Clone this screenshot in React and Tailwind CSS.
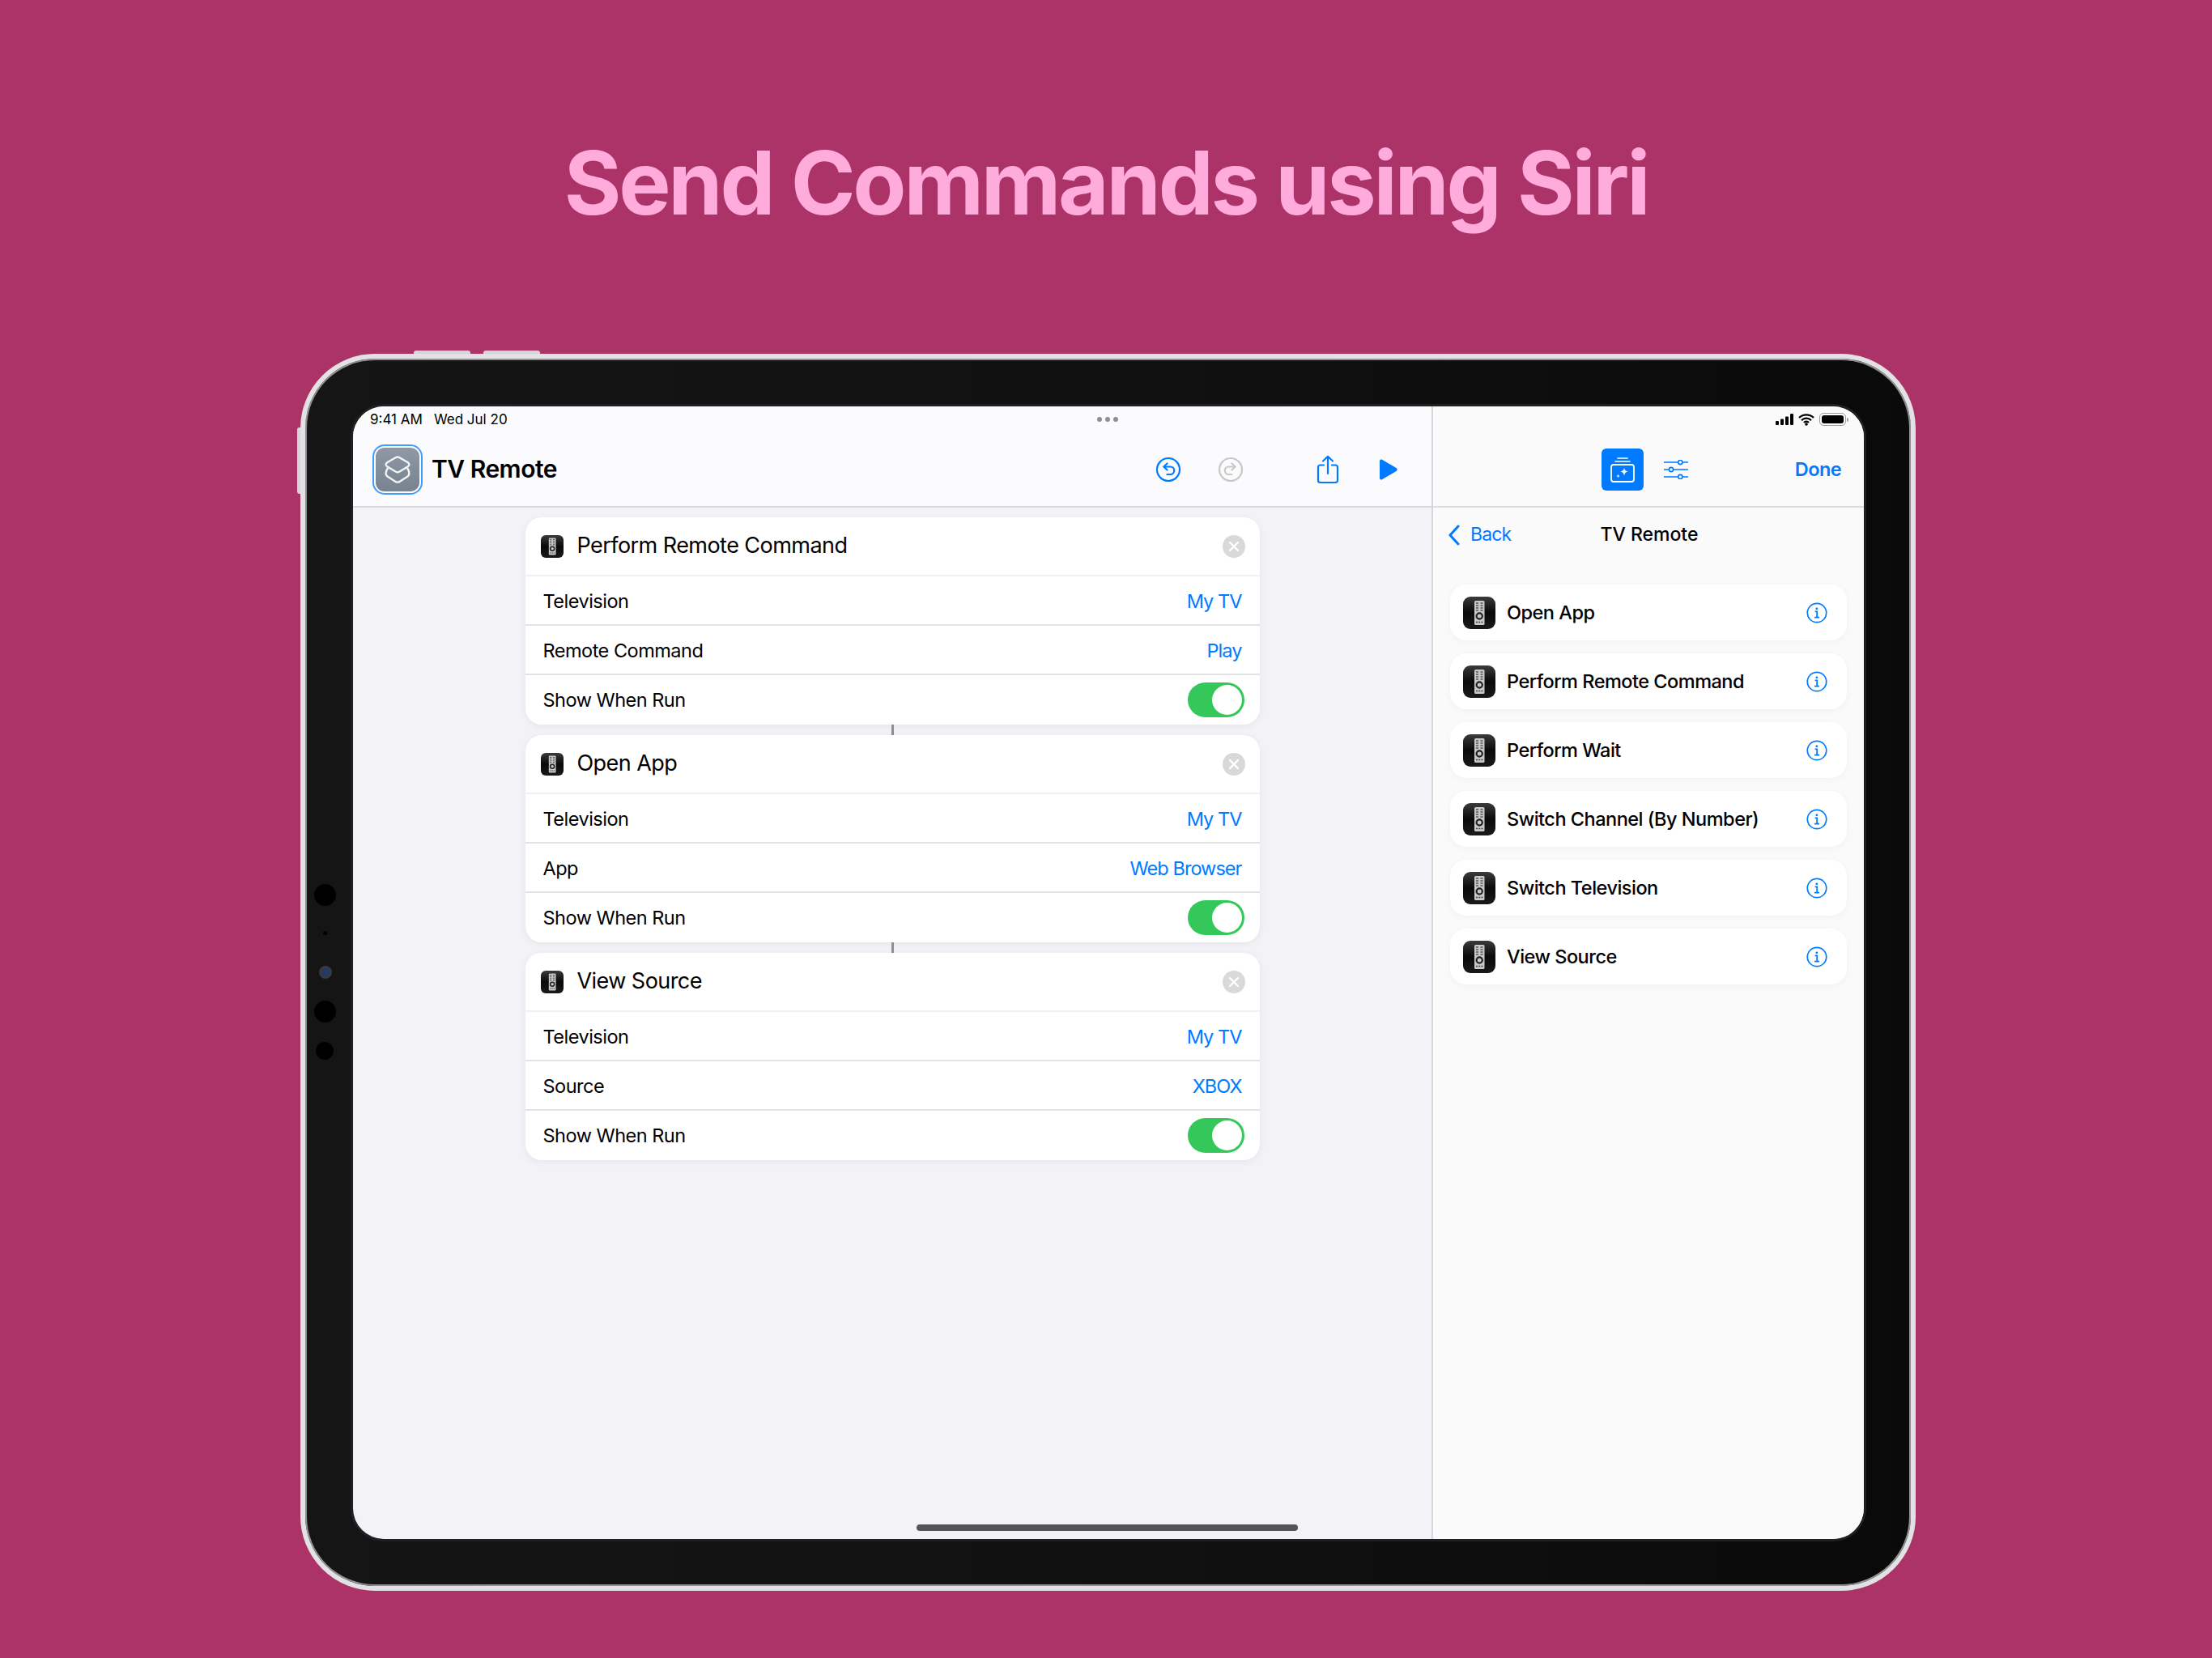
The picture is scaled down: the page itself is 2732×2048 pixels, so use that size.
import React from 'react'

const cards = [
  { title: 'Perform Remote Command', rows: [['Television', 'My TV'], ['Remote Command', 'Play']] },
  { title: 'Open App', rows: [['Television', 'My TV'], ['App', 'Web Browser']] },
  { title: 'View Source', rows: [['Television', 'My TV'], ['Source', 'XBOX']] },
]

const actions = ['Open App', 'Perform Remote Command', 'Perform Wait', 'Switch Channel (By Number)', 'Switch Television', 'View Source']

const RemoteIcon = ({ className }) => (
  <div className={`shrink-0 bg-linear-to-b from-[#3c3c3c] via-[#0a0a0a] to-[#1a1a1a] flex items-center justify-center ${className}`}>
    <svg viewBox="0 0 40 40" className="w-full h-full">
      <rect x="14" y="5" width="12.5" height="30" rx="1.5" fill="#c9c9c9" />
      <path d="M16 8h3M21.5 8h3M16 11h3M21.5 11h3M16 14h3M21.5 14h3M16 17h3M21.5 17h3" stroke="#555" strokeWidth="1.6" />
      <circle cx="20.2" cy="24" r="3.6" fill="none" stroke="#222" strokeWidth="2.2" />
      <path d="M16 31.5h2M19.2 31.5h2M22.4 31.5h2" stroke="#444" strokeWidth="1.6" />
    </svg>
  </div>
)

const Toggle = () => (
  <div className="w-[70px] h-[43px] rounded-full bg-[#34c759] flex items-center justify-end pr-[3px]">
    <div className="w-[37px] h-[37px] rounded-full bg-white" />
  </div>
)

const CloseButton = () => (
  <div className="w-[28px] h-[28px] rounded-full bg-[#d9d9d9] flex items-center justify-center">
    <svg viewBox="0 0 28 28" className="w-[28px] h-[28px]">
      <path d="M9 9l10 10M19 9L9 19" stroke="#fff" strokeWidth="2.4" strokeLinecap="round" />
    </svg>
  </div>
)

const ActionCard = ({ card }) => (
  <div className="w-[907px] h-[256px] bg-white rounded-[20px] shadow-[0_2px_10px_rgba(0,0,0,0.06)] flex flex-col">
    <div className="h-[73px] shrink-0 flex items-center pl-[19px] pr-[18px] border-b-2 border-[#f0f0f2]">
      <RemoteIcon className="w-[28px] h-[28px] rounded-[6px]" />
      <span className="ml-[17px] flex-1 text-[27px] tracking-[-0.55px] text-black">{card.title}</span>
      <CloseButton />
    </div>
    {card.rows.map(([label, value]) => (
      <div key={label} className="h-[61px] shrink-0 flex items-center justify-between pl-[22px] pr-[22px] pt-[2px] border-b-2 border-[#e3e3e5] text-[23.5px] tracking-[-0.5px]">
        <span className="text-black">{label}</span>
        <span className="text-[#007aff] tracking-[-0.95px]">{value}</span>
      </div>
    ))}
    <div className="flex-1 flex items-center justify-between pl-[22px] pr-[19px] text-[23.5px] tracking-[-0.5px]">
      <span className="text-black">Show When Run</span>
      <Toggle />
    </div>
  </div>
)

const InfoIcon = () => (
  <svg viewBox="0 0 26 26" className="w-[26px] h-[26px] shrink-0" fill="none" stroke="#007aff">
    <circle cx="13" cy="13" r="11.7" strokeWidth="1.7" />
    <circle cx="12.8" cy="7.8" r="1.4" fill="#007aff" stroke="none" />
    <path d="M10.6 11.4h2.6v7M10 18.6h6" strokeWidth="1.8" />
  </svg>
)

const UndoIcon = ({ color, flip }) => (
  <svg viewBox="0 0 32 32" className={`w-[32px] h-[32px] ${flip ? '-scale-x-100' : ''}`} fill="none" stroke={color} strokeWidth="2.2" strokeLinecap="round" strokeLinejoin="round">
    <circle cx="16" cy="16" r="14" />
    <path d="M10.5 12.5h8a4.7 4.7 0 0 1 0 9.5h-4" />
    <path d="M14.5 8.5l-4 4 4 4" />
  </svg>
)

const ShareIcon = () => (
  <svg viewBox="0 0 28 36" className="w-[28px] h-[36px]" fill="none" stroke="#007aff" strokeWidth="2.2" strokeLinecap="round" strokeLinejoin="round">
    <path d="M9 12.5H4.5a2.5 2.5 0 0 0-2.5 2.5v16.500a2.500 2.500 0 0 0 2.500 2.500h19a2.500 2.500 0 0 0 2.500-2.500V15a2.500 2.500 0 0 0-2.500-2.500H19" />
    <path d="M14 2v21M8 7.500L14 1.800l6 5.700" />
  </svg>
)

const PlayIcon = () => (
  <svg viewBox="0 0 23 26" className="w-[23px] h-[26px]">
    <path d="M1 2.500c0-1.800 1.500-2.500 3-1.700l17.500 10.300c1.600 1 1.600 2.800 0 3.800L4 25.200c-1.500.8-3 .1-3-1.700z" fill="#007aff" />
  </svg>
)

const AddActionIcon = () => (
  <svg viewBox="0 0 52 52" className="w-[52px] h-[52px]" fill="none" stroke="#fff">
    <path d="M20 12h12" strokeWidth="1.600" strokeLinecap="round" />
    <path d="M17 16h18" strokeWidth="1.600" strokeLinecap="round" />
    <rect x="12" y="20" width="28" height="21" rx="3" strokeWidth="1.800" />
    <path d="M28 23.500c.6 3.400 1.700 4.500 5 5.100-3.300.6-4.400 1.700-5 5.100-.6-3.400-1.700-4.500-5-5.100 3.300-.6 4.400-1.700 5-5.100z" fill="#fff" stroke="none" />
    <path d="M20.500 31.500c.3 1.800.8 2.300 2.500 2.500-1.700.3-2.200.8-2.500 2.500-.3-1.700-.8-2.200-2.500-2.500 1.700-.2 2.200-.7 2.500-2.500z" fill="#fff" stroke="none" />
  </svg>
)

const SlidersIcon = () => (
  <svg viewBox="0 0 30 24" className="w-[30px] h-[24px]" fill="none" stroke="#007aff" strokeWidth="1.600">
    <path d="M0 3h17.500M23 3h7M0 12h6M12 12h18M0 21h17.500M23 21h7" />
    <circle cx="20.300" cy="3" r="2.600" />
    <circle cx="9" cy="12" r="2.600" />
    <circle cx="20.300" cy="21" r="2.600" />
  </svg>
)

const LayersIcon = () => (
  <svg viewBox="0 0 54 54" className="w-[54px] h-[54px]" fill="none" stroke="#f2f4f6" strokeWidth="2.400" strokeLinejoin="round">
    <path d="M24.500 12.200Q27 10.800 29.500 12.200L39.800 18.300Q43 20.800 39.800 23.300L29.500 29.500Q27 30.900 24.500 29.500L14.200 23.300Q11 20.800 14.200 18.300Z" />
    <path d="M15.500 25.400L14.200 26.300Q11 32.800 14.200 35.300L24.500 41.900Q27 43.300 29.500 41.900L39.800 35.300Q43 32.800 39.800 26.300L38.500 25.400" />
  </svg>
)

const StatusIcons = () => (
  <div className="flex items-center gap-[5px]">
    <svg viewBox="0 0 23 14" className="w-[23px] h-[14px]" fill="#000">
      <rect x="0" y="9" width="4" height="5" rx="1" />
      <rect x="6" y="6.500" width="4" height="7.500" rx="1" />
      <rect x="12" y="3.500" width="4" height="10.500" rx="1" />
      <rect x="18" y="0" width="4" height="14" rx="1" />
    </svg>
    <svg viewBox="0 0 20 15" className="w-[20px] h-[15px]" fill="none" stroke="#000" strokeWidth="2.200">
      <path d="M1 5a13 13 0 0 1 18 0M4 8.200a8.500 8.500 0 0 1 12 0M7 11a4 4 0 0 1 6 0" />
      <circle cx="10" cy="13" r="1.800" fill="#000" stroke="none" />
    </svg>
    <div className="flex items-center ml-[1px]">
      <div className="w-[33px] h-[16px] rounded-[5px] border border-[#9c9c9c] p-[2px]">
        <div className="w-full h-full rounded-[3px] bg-black" />
      </div>
      <div className="w-[2px] h-[5px] bg-[#9c9c9c] rounded-r-full ml-[1px]" />
    </div>
  </div>
)

export default function App() {
  return (
    <div className="w-[2732px] h-[2048px] bg-[#ab3367] overflow-hidden font-['Inter',sans-serif]">
      <div className="h-[437px] pt-[154px] text-center">
        <h1 className="text-[108px] leading-[144px] font-bold text-[#ffabdc] tracking-[-3.2px]">Send Commands using Siri</h1>
      </div>

      <div className="relative ml-[371px] w-[1995px] h-[1528px] rounded-[92px] bg-linear-to-r from-[#151515] via-[#111111] to-[#0a0a0a] border-[6px] border-[#e2e2e4] shadow-[inset_0_0_0_2px_#8f8f91] pl-[59px] pt-[59px] pr-[58px] pb-[58px]">
        {/* hardware buttons */}
        <div className="absolute top-[-10px] left-[134px] w-[70px] h-[4px] rounded-t-[3px] bg-[#d6d6d8]" />
        <div className="absolute top-[-10px] left-[220px] w-[70px] h-[4px] rounded-t-[3px] bg-[#d6d6d8]" />
        <div className="absolute top-[85px] left-[-10px] w-[4px] h-[82px] rounded-l-[3px] bg-[#d6d6d8]" />

        {/* front camera array */}
        <div className="absolute left-[11px] top-[649px] w-[27px] h-[27px] rounded-full bg-black" />
        <div className="absolute left-[22px] top-[707px] w-[5px] h-[5px] rounded-full bg-black" />
        <div className="absolute left-[17px] top-[750px] w-[16px] h-[16px] rounded-full bg-[#3a3a3e] flex items-center justify-center">
          <div className="w-[10px] h-[10px] rounded-full bg-[#233a68]" />
        </div>
        <div className="absolute left-[11px] top-[793px] w-[27px] h-[27px] rounded-full bg-black" />
        <div className="absolute left-[13px] top-[844px] w-[22px] h-[22px] rounded-full bg-black" />

        <div className="relative w-full h-full rounded-[38px] overflow-hidden flex bg-[#f2f2f7] shadow-[0_0_0_3px_#1f2023]">
          {/* editor */}
          <div className="w-[1334px] shrink-0 flex flex-col border-r-2 border-[#d8d8dc]">
            <div className="h-[125px] shrink-0 bg-[#fbfbfd] border-b-2 border-[#d8d8dc] flex flex-col">
              <div className="h-[30px] pl-[21px] pt-[4px] flex items-center gap-[14px] text-[17px] text-black">
                <span>9:41 AM</span>
                <span>Wed Jul 20</span>
              </div>
              <div className="flex-1 flex items-center pl-[24px] pt-[2px]">
                <div className="w-[62px] h-[62px] rounded-[15px] border-2 border-[#3f9bff] p-[2px]">
                  <div className="w-full h-full rounded-[11px] bg-linear-to-b from-[#8f99a5] to-[#778390] flex items-center justify-center">
                    <LayersIcon />
                  </div>
                </div>
                <span className="ml-[11px] text-[30px] font-semibold text-black tracking-[-0.5px]">TV Remote</span>
                <div className="ml-auto flex items-center mr-[42px]">
                  <UndoIcon color="#007aff" />
                  <div className="ml-[45px]"><UndoIcon color="#c8c8c8" flip /></div>
                  <div className="ml-[90px]"><ShareIcon /></div>
                  <div className="ml-[49px]"><PlayIcon /></div>
                </div>
              </div>
            </div>
            <div className="flex-1 flex flex-col items-center pt-[12px]">
              {cards.map((card, i) => (
                <React.Fragment key={card.title}>
                  {i > 0 && <div className="w-[3px] h-[13px] bg-[#8e8e93]" />}
                  <ActionCard card={card} />
                </React.Fragment>
              ))}
            </div>
          </div>

          {/* actions sidebar */}
          <div className="flex-1 flex flex-col bg-[#fafafa]">
            <div className="h-[125px] shrink-0 border-b-2 border-[#dcdcde] flex flex-col">
              <div className="h-[30px] flex items-center justify-end pr-[19px] pt-[2px]">
                <StatusIcons />
              </div>
              <div className="flex-1 flex items-center pl-[208px] pr-[28px] pt-[2px]">
                <div className="w-[52px] h-[52px] rounded-[6px] bg-[#007aff]">
                  <AddActionIcon />
                </div>
                <div className="ml-[25px]"><SlidersIcon /></div>
                <span className="ml-auto text-[23.5px] font-semibold tracking-[-0.6px] text-[#007aff]">Done</span>
              </div>
            </div>
            <div className="h-[67px] shrink-0 relative flex items-center justify-center">
              <div className="absolute left-[18px] flex items-center gap-[12px] text-[23px] tracking-[-0.9px] text-[#007aff]">
                <svg viewBox="0 0 16 26" className="w-[16px] h-[26px]" fill="none" stroke="#007aff" strokeWidth="3" strokeLinecap="round" strokeLinejoin="round">
                  <path d="M13 2L3 13l10 11" />
                </svg>
                <span>Back</span>
              </div>
              <span className="ml-[2px] text-[23px] font-medium text-black">TV Remote</span>
            </div>
            <div className="flex flex-col gap-[16px] pt-[28px] pl-[21px] pr-[21px]">
              {actions.map((name) => (
                <div key={name} className="h-[69px] bg-white rounded-[20px] shadow-[0_2px_10px_rgba(0,0,0,0.04)] flex items-center pl-[16px] pr-[24px]">
                  <RemoteIcon className="w-[40px] h-[40px] rounded-[9px]" />
                  <span className="ml-[14px] flex-1 text-[23.5px] tracking-[-0.5px] font-medium text-black">{name}</span>
                  <InfoIcon />
                </div>
              ))}
            </div>
          </div>

          {/* multitasking dots and home bar float over the panes */}
          <div className="absolute top-[13px] left-[919px] flex gap-[4px]">
            <div className="w-[6px] h-[6px] rounded-full bg-[#8e8e93]" />
            <div className="w-[6px] h-[6px] rounded-full bg-[#8e8e93]" />
            <div className="w-[6px] h-[6px] rounded-full bg-[#8e8e93]" />
          </div>
          <div className="absolute bottom-[10px] left-[696px] w-[471px] h-[8px] rounded-full bg-[#555558]" />
        </div>
      </div>
    </div>
  )
}
